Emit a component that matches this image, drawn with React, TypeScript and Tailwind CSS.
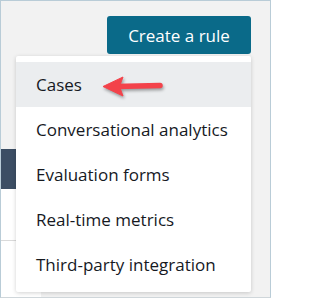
const items = [
  'Cases',
  'Conversational analytics',
  'Evaluation forms',
  'Real-time metrics',
  'Third-party integration',
];

function RedArrow() {
  return (
    <svg
      className="absolute left-[86px] top-[13px] drop-shadow-[1px_2px_1.5px_rgba(0,0,0,0.35)]"
      width="62"
      height="24"
      viewBox="0 0 62 24"
    >
      <line x1="14" y1="11.5" x2="58" y2="10.5" stroke="#f3424a" strokeWidth="5.5" strokeLinecap="round" />
      <polygon points="1,11.5 21,2 17.5,11.5 21,21" fill="#f3424a" strokeLinejoin="round" stroke="#f3424a" strokeWidth="1" />
    </svg>
  );
}

export default function App() {
  return (
    <div className="w-[273px] h-[300px] bg-white">
      <div className="relative w-[271px] h-[298px] overflow-hidden bg-[#f2f2f2] border border-[#b9ccd7] border-b-[#cfd6da] font-['Open_Sans',sans-serif]">
        {/* header with the button and its open menu */}
        <div className="flex justify-end pt-[15px] pr-[19px]">
          <div className="relative">
            <button className="w-[144px] h-[38px] rounded-[3px] bg-[#0a6a89] text-white text-[17px] leading-none">
              Create a rule
            </button>
            <div className="absolute right-0 top-[40px] z-10 w-[235px] bg-white pt-[6px] pb-[5px] rounded-[2px] shadow-[0_1px_4px_rgba(0,0,0,0.18)]">
              {items.map((label, i) => (
                <div
                  key={label}
                  className={
                    i === 0
                      ? 'relative h-[45px] flex items-center px-[20px] bg-[#ebedef] text-[17px] text-[#16191f]'
                      : 'h-[45px] flex items-center px-[20px] text-[17px] text-[#16191f]'
                  }
                >
                  {label}
                  {i === 0 && <RedArrow />}
                </div>
              ))}
            </div>
          </div>
        </div>

        {/* page behind the menu */}
        <div className="mt-[95px] flex flex-col w-[40px]">
          <div className="h-[40px] bg-[#3c4e64]" />
          <div className="h-[51px] bg-white" />
          <div className="h-px bg-[#dadada]" />
          <div className="h-[60px] bg-white" />
        </div>
      </div>
    </div>
  );
}
